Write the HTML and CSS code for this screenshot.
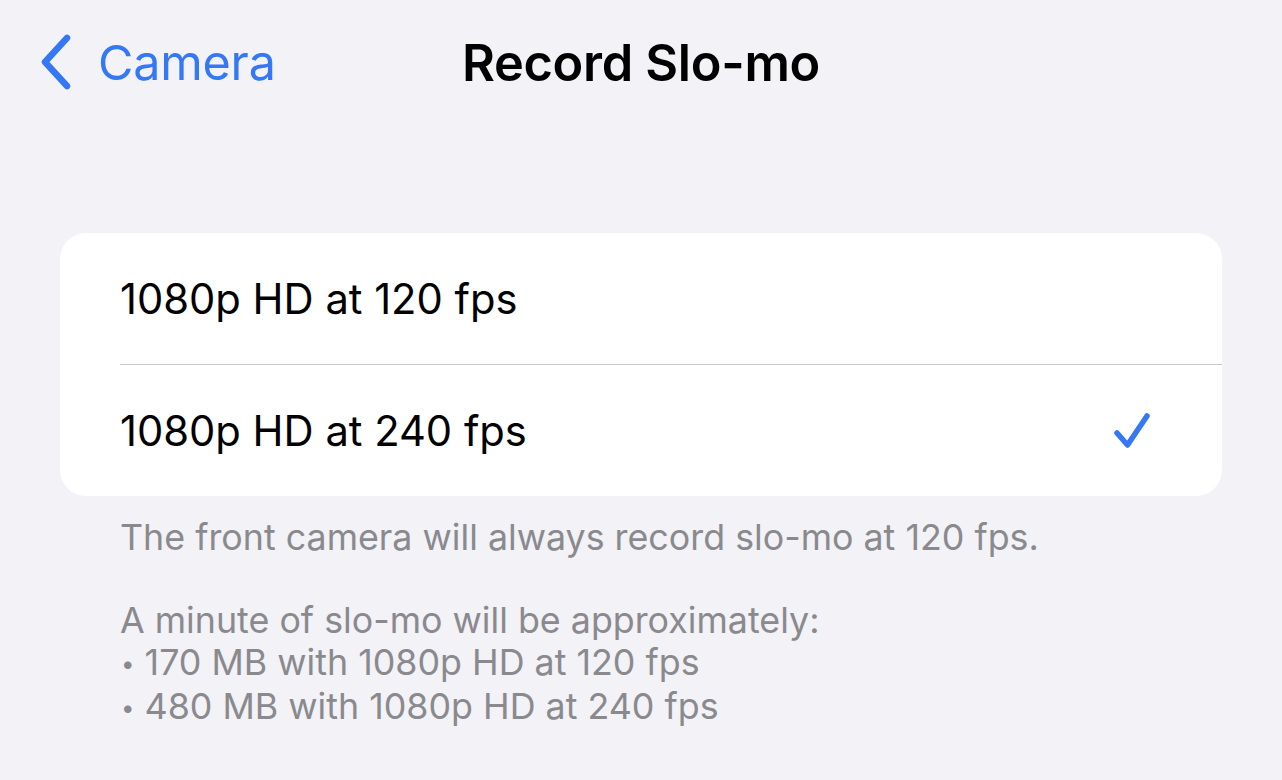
FILE: index.html
```html
<!DOCTYPE html>
<html lang="en">
<head>
<meta charset="utf-8">
<link rel="stylesheet" href="styles.css">
</head>
<body>
<div class="screen">
  <header class="nav">
    <a class="back">
      <svg class="chev" width="36" height="60" viewBox="0 0 36 60"><path d="M30 6 L8 30 L30 54" fill="none" stroke="#3478f6" stroke-width="6.5" stroke-linecap="round" stroke-linejoin="round"/></svg>
      <span class="back-label">Camera</span>
    </a>
    <h1 class="title">Record Slo-mo</h1>
  </header>
  <section class="card">
    <div class="row"><span class="row-label">1080p HD at 120 fps</span></div>
    <div class="row"><span class="row-label">1080p HD at 240 fps</span>
      <svg class="check" width="40" height="40" viewBox="0 0 40 40"><path d="M5 21 L15.5 33 L35 4" fill="none" stroke="#3478f6" stroke-width="5.5" stroke-linecap="round" stroke-linejoin="round"/></svg>
    </div>
  </section>
  <div class="footer">
    <p>The front camera will always record slo-mo at 120 fps.</p>
    <p>A minute of slo-mo will be approximately:<br><span class="bullet">•</span> 170 MB with 1080p HD at 120 fps<br><span class="bullet">•</span> 480 MB with 1080p HD at 240 fps</p>
  </div>
</div>
</body>
</html>
```
FILE: styles.css
```css
html, body { margin: 0; padding: 0; }
body {
  background: #f2f2f7;
  font-family: Inter, "Noto Sans", sans-serif;
  width: 1282px;
  height: 780px;
  overflow: hidden;
}
.screen { padding: 0 60px; }
.nav {
  position: relative;
  height: 130px;
  display: flex;
  align-items: center;
  justify-content: center;
}
.back {
  position: absolute;
  left: -23px;
  top: 32px;
  display: flex;
  align-items: center;
  gap: 25px;
  color: #3478f6;
}
.chev { display: block; }
.back-label { font-size: 48.5px; font-weight: 400; letter-spacing: -0.2px; }
.title {
  margin: 0;
  font-size: 50.5px;
  font-weight: 600;
  color: #000;
  letter-spacing: -0.3px;
  position: relative;
  top: -3px;
}
.card {
  margin-top: 103px;
  background: #fff;
  border-radius: 26px;
}
.row {
  height: 131px;
  margin-left: 60px;
  padding-right: 70px;
  display: flex;
  align-items: center;
  justify-content: space-between;
}
.row + .row { border-top: 1px solid #c8c8cc; height: 131px; }
.row-label { font-size: 41.7px; color: #000; letter-spacing: 0; }
.check { display: block; position: relative; top: 1px; }
.footer {
  padding: 20px 60px 0;
  color: #8a8a8e;
  font-size: 35.8px;
  line-height: 42px;
}
.footer p { margin: 0 0 41px; }
.bullet { font-size: 24px; margin-left: 1px; vertical-align: 3px; }
```
